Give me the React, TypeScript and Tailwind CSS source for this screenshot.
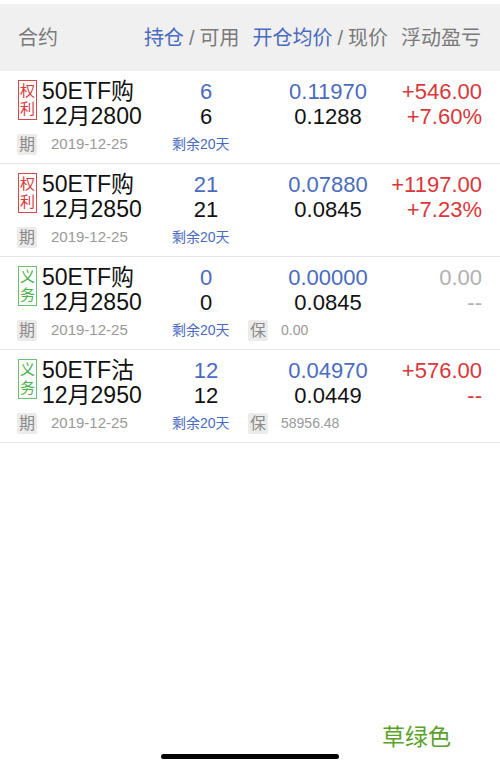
const FONT = { fontFamily: '"Liberation Sans", "Noto Sans CJK SC", sans-serif' };

type Row = {
  tag: "权利" | "义务";
  name: string;
  month: string;
  hold: string;
  avail: string;
  avg: string;
  now: string;
  pnl: string;
  pct: string;
  gain: boolean;
  bao?: string;
};

const rows: Row[] = [
  { tag: "权利", name: "50ETF购", month: "12月2800", hold: "6", avail: "6", avg: "0.11970", now: "0.1288", pnl: "+546.00", pct: "+7.60%", gain: true },
  { tag: "权利", name: "50ETF购", month: "12月2850", hold: "21", avail: "21", avg: "0.07880", now: "0.0845", pnl: "+1197.00", pct: "+7.23%", gain: true },
  { tag: "义务", name: "50ETF购", month: "12月2850", hold: "0", avail: "0", avg: "0.00000", now: "0.0845", pnl: "0.00", pct: "--", gain: false, bao: "0.00" },
  { tag: "义务", name: "50ETF沽", month: "12月2950", hold: "12", avail: "12", avg: "0.04970", now: "0.0449", pnl: "+576.00", pct: "--", gain: true, bao: "58956.48" },
];

function Tag({ text }: { text: string }) {
  const red = text === "权利";
  return (
    <div
      className={`w-[19px] h-[40px] mt-[1px] shrink-0 flex flex-col items-center justify-center border text-[15px] leading-[18px] ${
        red ? "border-[#d9464a] text-[#d9373a]" : "border-[#6cbf6c] text-[#4caf50]"
      }`}
    >
      <span>{text[0]}</span>
      <span>{text[1]}</span>
    </div>
  );
}

function Box({ text }: { text: string }) {
  return (
    <div className="w-[20px] h-[21px] shrink-0 bg-[#ebebeb] rounded-[2px] flex items-center justify-center text-[16px] text-[#8a8a8a]">
      {text}
    </div>
  );
}

function OptionRow({ r }: { r: Row }) {
  return (
    <div className="pt-[8px] pb-[8px] border-b border-[#e6e6e6]">
      <div className="flex text-[22px] leading-[25px]">
        <div className="w-[166px] shrink-0 pl-[18px] flex">
          <Tag text={r.tag} />
          <div className="ml-[5px] text-[23px] text-[#111] whitespace-nowrap">
            <div>{r.name}</div>
            <div>{r.month}</div>
          </div>
        </div>
        <div className="w-[80px] shrink-0 text-center">
          <div className="text-[#4a6bbf]">{r.hold}</div>
          <div className="text-[#111]">{r.avail}</div>
        </div>
        <div className="ml-[22px] w-[120px] shrink-0 text-center whitespace-nowrap">
          <div className="text-[#4a6bbf]">{r.avg}</div>
          <div className="text-[#111]">{r.now}</div>
        </div>
        <div className="flex-1 min-w-0 pr-[18px] text-right whitespace-nowrap">
          <div className={r.gain ? "text-[#d9373a]" : "text-[#b0b0b0]"}>{r.pnl}</div>
          <div className={r.gain ? "text-[#d9373a]" : "text-[#b0b0b0]"}>{r.pct}</div>
        </div>
      </div>
      <div className="mt-[5px] h-[21px] flex items-center pl-[17px]">
        <Box text="期" />
        <span className="ml-[14px] w-[121px] shrink-0 text-[15px] text-[#999]">2019-12-25</span>
        <span className="w-[76px] shrink-0 text-[14px] text-[#4a6bbf]">剩余20天</span>
        {r.bao !== undefined && (
          <>
            <Box text="保" />
            <span className="ml-[13px] text-[14px] text-[#999]">{r.bao}</span>
          </>
        )}
      </div>
    </div>
  );
}

export default function App() {
  return (
    <div className="w-[500px] h-[770px] bg-white flex flex-col" style={FONT}>
      <div className="mt-[4px] h-[67px] bg-[#f0f0f0] flex items-center pl-[18px] pr-[19px] text-[20px] text-[#7a7a7a]">
        <span>合约</span>
        <div className="ml-auto flex gap-[13px]">
          <span>
            <span className="text-[#4a6bbf]">持仓</span>
            <span className="px-[5px]">/</span>可用
          </span>
          <span>
            <span className="text-[#4a6bbf]">开仓均价</span>
            <span className="px-[5px]">/</span>现价
          </span>
          <span>浮动盈亏</span>
        </div>
      </div>
      {rows.map((r, i) => (
        <OptionRow key={i} r={r} />
      ))}
      <div className="flex-1" />
      <div className="text-right pr-[49px] text-[23px] leading-[24px] text-[#5aa12a]">草绿色</div>
      <div className="mt-[5px] mb-[11px] mx-auto w-[178px] h-[5px] rounded-full bg-black" />
    </div>
  );
}
